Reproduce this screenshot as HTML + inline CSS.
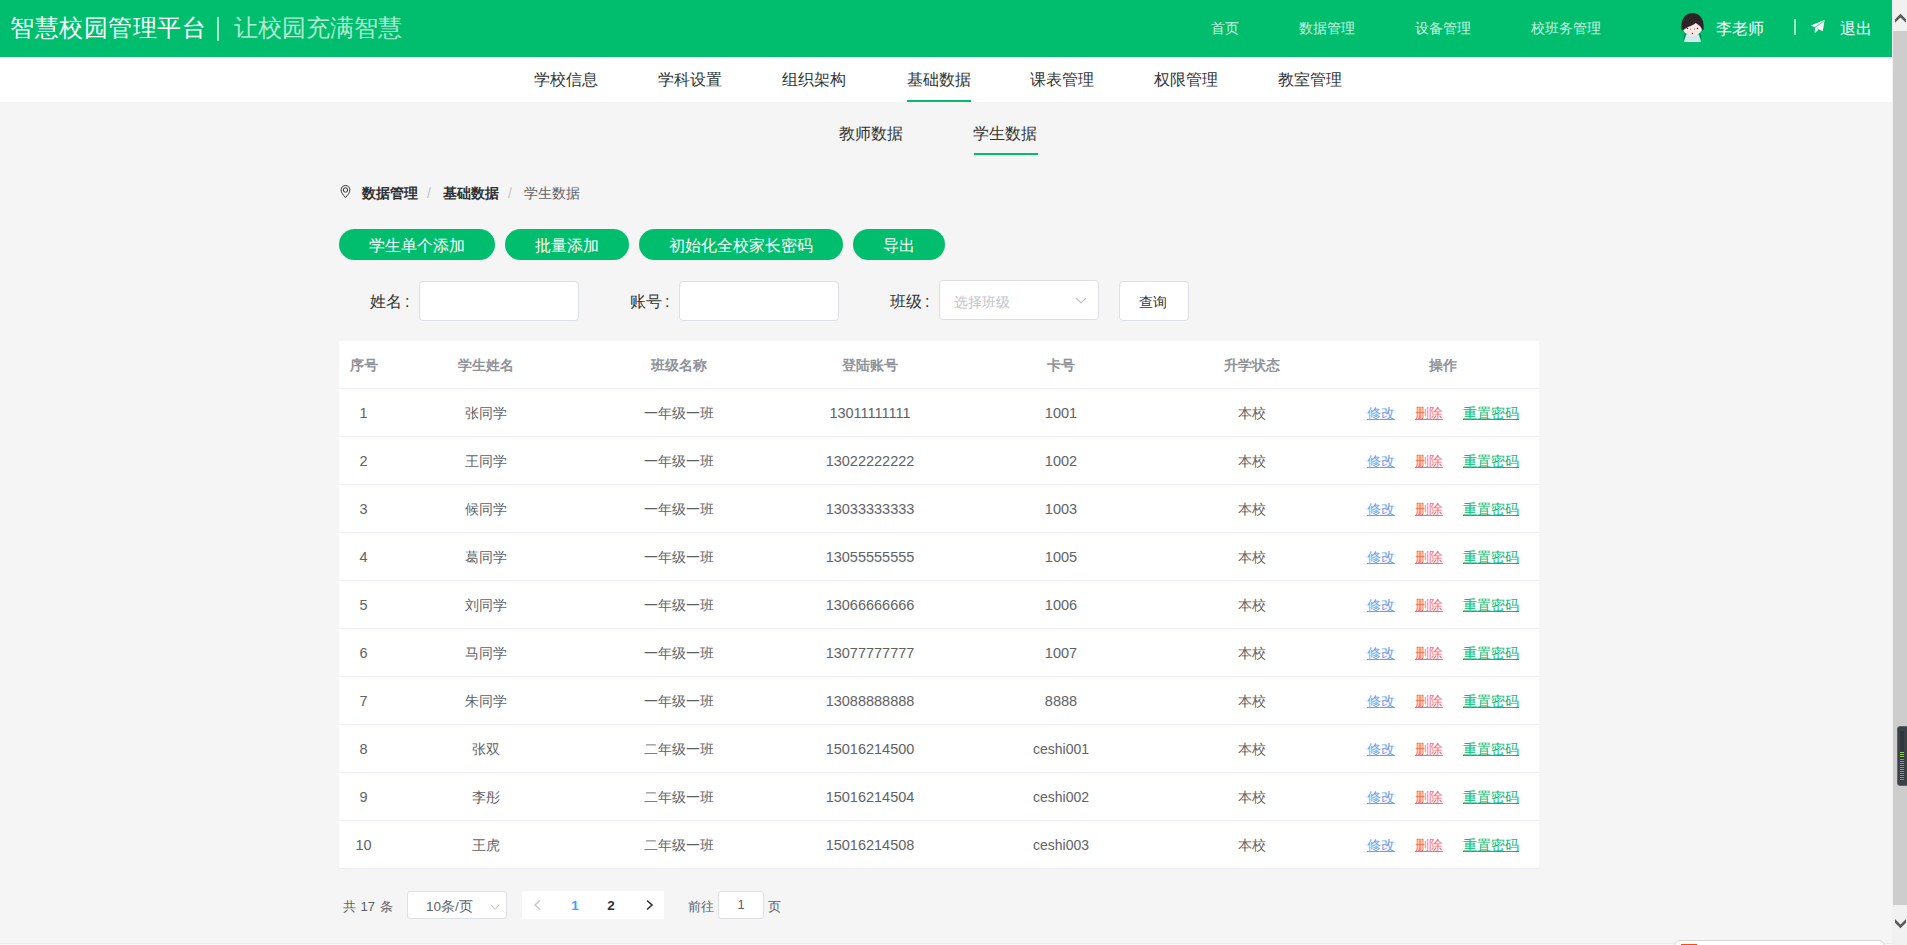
<!DOCTYPE html>
<html><head><meta charset="utf-8">
<style>
*{margin:0;padding:0;box-sizing:border-box}
html,body{width:1907px;height:945px;overflow:hidden;background:#f5f5f5;font-family:"Liberation Sans",sans-serif;color:#333}
.abs{position:absolute}
#hdr{position:absolute;left:0;top:0;width:1892px;height:57px;background:#00be6e}
#title{position:absolute;left:10px;top:12px;font-size:24px;line-height:32px;color:#fff;white-space:nowrap;letter-spacing:0.5px}
#title .sep{color:rgba(255,255,255,.7);margin:0 6px 0 6px}
#title .slo{color:rgba(255,255,255,.7)}
.tnav{position:absolute;top:18px;font-size:14px;line-height:20px;color:rgba(255,255,255,.8);white-space:nowrap}
#subnav{position:absolute;left:0;top:57px;width:1892px;height:45px;background:#fff}
.sn{position:absolute;top:69px;font-size:16px;line-height:22px;color:#333;white-space:nowrap}
.ul{position:absolute;height:2px;background:#00be6e}
.bc{position:absolute;top:183px;font-size:14px;line-height:20px;white-space:nowrap}
.btn{position:absolute;top:229px;height:31px;border-radius:16px;background:#00be6e;color:#fff;font-size:16px;line-height:33px;text-align:center;white-space:nowrap}
.lbl{position:absolute;top:291px;font-size:16px;line-height:22px;color:#333;white-space:nowrap}
.inp{position:absolute;top:281px;width:160px;height:40px;background:#fff;border:1px solid #dcdfe6;border-radius:4px}
#tbl{position:absolute;left:339px;top:341px;width:1200px;height:528px;background:#fff}
.c{position:absolute;width:200px;text-align:center;white-space:nowrap;font-size:14px}
.th{height:48px;line-height:48px;color:#909399;font-weight:bold}
.td{height:48px;line-height:48px;color:#606266}
.hl{position:absolute;left:339px;width:1200px;height:1px;background:#ebeef5}
.ops{position:absolute;left:1367px;height:48px;line-height:48px;font-size:14px;white-space:nowrap}
.ops a{text-decoration:underline;margin-right:20px}
.ops a.b{color:#6d9ef5}
.ops a.r{color:#f56c6c}
.ops a.g{color:#06b96c;margin-right:0}
#sb{position:absolute;left:1892px;top:0;width:15px;height:945px;background:#f1f1f1}
#thumb{position:absolute;left:1893px;top:31px;width:14px;height:874px;background:#cdcdcd}
</style></head><body>
<div id="hdr"></div>
<div id="title">智慧校园管理平台</div>
<div class="abs" style="left:217px;top:17px;width:2px;height:24px;background:rgba(255,255,255,.66)"></div>
<div class="abs" style="left:234px;top:12px;font-size:24px;line-height:32px;color:rgba(255,255,255,.7);white-space:nowrap">让校园充满智慧</div>
<div class="tnav" style="left:1211px">首页</div>
<div class="tnav" style="left:1299px">数据管理</div>
<div class="tnav" style="left:1415px">设备管理</div>
<div class="tnav" style="left:1531px">校班务管理</div>
<div class="abs" style="left:1716px;top:18px;font-size:16px;line-height:22px;color:#fff">李老师</div>
<div class="abs" style="left:1794px;top:19px;width:2px;height:16px;background:rgba(255,255,255,.62)"></div>
<div class="abs" style="left:1840px;top:18px;font-size:16px;line-height:22px;color:#fff">退出</div>


<svg class="abs" style="left:1676px;top:10px" width="32" height="35" viewBox="0 0 32 35">
<path d="M10 24.5 L23 24.5 L25 32 L8 32 Z" fill="#d3eaec"/>
<path d="M9.6 22.5 L8.2 28.5 M23.4 22.5 L24.8 28.5" stroke="#222" stroke-width=".6"/>
<path d="M6.8 12 L6.8 17 C6.8 22 11 25.8 16.5 25.8 C22 25.8 26.2 22 26.2 17 L26.2 12 Z" fill="#fbe5e5"/>
<path d="M5.3 19.5 C4.6 8 10 3 16.5 3 C23 3 28.4 8 27.7 19.5 L26.2 20.3 C25.6 16.5 22 14.5 19.5 13 C18 15.5 12 15.8 6.8 20.5 Z" fill="#2e2428"/>
<circle cx="11.4" cy="18.4" r=".65" fill="#222"/><circle cx="21.5" cy="18.4" r=".65" fill="#222"/>
<circle cx="14.5" cy="19" r=".5" fill="#555"/><circle cx="18.5" cy="19" r=".5" fill="#555"/>
<circle cx="16.5" cy="23.4" r=".7" fill="#222"/>
</svg>
<svg class="abs" style="left:1805px;top:15px" width="22" height="22" viewBox="0 0 22 22">
<path d="M19.6 5 L5.8 10.6 L10.2 12.4 L17.8 16.2 Z" fill="#fff"/>
<path d="M10 12.2 L9.8 18.2 L13.6 14.6 Z" fill="#fff"/>
<path d="M9.6 12.6 L18.6 6.4" stroke="#00be6e" stroke-width=".8"/>
</svg>
<div id="subnav"></div>
<div class="sn" style="left:534px">学校信息</div>
<div class="sn" style="left:658px">学科设置</div>
<div class="sn" style="left:782px">组织架构</div>
<div class="sn" style="left:907px">基础数据</div>
<div class="sn" style="left:1030px">课表管理</div>
<div class="sn" style="left:1154px">权限管理</div>
<div class="sn" style="left:1278px">教室管理</div>
<div class="ul" style="left:907px;top:100px;width:64px"></div>

<div class="sn" style="left:839px;top:123px">教师数据</div>
<div class="sn" style="left:973px;top:123px">学生数据</div>
<div class="ul" style="left:974px;top:153px;width:64px"></div>

<svg class="abs" style="left:339px;top:184px" width="13" height="15" viewBox="0 0 13 15">
<path d="M6.5 13.6 C3.8 10.6 2.1 8.2 2.1 5.9 C2.1 3.4 4.1 1.5 6.5 1.5 C8.9 1.5 10.9 3.4 10.9 5.9 C10.9 8.2 9.2 10.6 6.5 13.6 Z" fill="none" stroke="#303133" stroke-width="1"/>
<circle cx="6.5" cy="6" r="2.2" fill="none" stroke="#303133" stroke-width="1"/>
</svg>
<div class="bc" style="left:362px;font-weight:bold;color:#303133">数据管理</div>
<div class="bc" style="left:427px;color:#c0c4cc">/</div>
<div class="bc" style="left:443px;font-weight:bold;color:#303133">基础数据</div>
<div class="bc" style="left:508px;color:#c0c4cc">/</div>
<div class="bc" style="left:524px;color:#606266">学生数据</div>

<div class="btn" style="left:339px;width:156px">学生单个添加</div>
<div class="btn" style="left:505px;width:124px">批量添加</div>
<div class="btn" style="left:639px;width:204px">初始化全校家长密码</div>
<div class="btn" style="left:853px;width:92px">导出</div>

<div class="lbl" style="left:370px">姓名<span style="margin-left:3px">:</span></div>
<div class="inp" style="left:419px"></div>
<div class="lbl" style="left:630px">账号<span style="margin-left:3px">:</span></div>
<div class="inp" style="left:679px"></div>
<div class="lbl" style="left:890px">班级<span style="margin-left:3px">:</span></div>
<div class="inp" style="left:939px;top:280px"></div>
<div class="abs" style="left:954px;top:292px;font-size:14px;line-height:20px;color:#c0c4cc">选择班级</div>
<svg class="abs" style="left:1074px;top:295px" width="14" height="12" viewBox="0 0 14 12"><path d="M2 3 L7 8 L12 3" fill="none" stroke="#c0c4cc" stroke-width="1.2"/></svg>
<div class="inp" style="left:1119px;width:70px"></div>
<div class="abs" style="left:1139px;top:292px;font-size:14px;line-height:20px;color:#333">查询</div>

<div id="tbl"></div>
<div class="c th" style="left:263.5px;top:341px">序号</div>
<div class="c th" style="left:385.5px;top:341px">学生姓名</div>
<div class="c th" style="left:579px;top:341px">班级名称</div>
<div class="c th" style="left:770px;top:341px">登陆账号</div>
<div class="c th" style="left:961px;top:341px">卡号</div>
<div class="c th" style="left:1152px;top:341px">升学状态</div>
<div class="c th" style="left:1343px;top:341px">操作</div>
<div class="c td" style="left:263.5px;top:389px;font-size:14.5px">1</div>
<div class="c td" style="left:385.5px;top:389px">张同学</div>
<div class="c td" style="left:579px;top:389px">一年级一班</div>
<div class="c td" style="left:770px;top:389px;font-size:14.5px">13011111111</div>
<div class="c td" style="left:961px;top:389px;font-size:14.5px">1001</div>
<div class="c td" style="left:1152px;top:389px">本校</div>
<div class="ops" style="top:389px"><a class="b">修改</a><a class="r">删除</a><a class="g">重置密码</a></div>
<div class="hl" style="top:388px"></div>
<div class="c td" style="left:263.5px;top:437px;font-size:14.5px">2</div>
<div class="c td" style="left:385.5px;top:437px">王同学</div>
<div class="c td" style="left:579px;top:437px">一年级一班</div>
<div class="c td" style="left:770px;top:437px;font-size:14.5px">13022222222</div>
<div class="c td" style="left:961px;top:437px;font-size:14.5px">1002</div>
<div class="c td" style="left:1152px;top:437px">本校</div>
<div class="ops" style="top:437px"><a class="b">修改</a><a class="r">删除</a><a class="g">重置密码</a></div>
<div class="hl" style="top:436px"></div>
<div class="c td" style="left:263.5px;top:485px;font-size:14.5px">3</div>
<div class="c td" style="left:385.5px;top:485px">候同学</div>
<div class="c td" style="left:579px;top:485px">一年级一班</div>
<div class="c td" style="left:770px;top:485px;font-size:14.5px">13033333333</div>
<div class="c td" style="left:961px;top:485px;font-size:14.5px">1003</div>
<div class="c td" style="left:1152px;top:485px">本校</div>
<div class="ops" style="top:485px"><a class="b">修改</a><a class="r">删除</a><a class="g">重置密码</a></div>
<div class="hl" style="top:484px"></div>
<div class="c td" style="left:263.5px;top:533px;font-size:14.5px">4</div>
<div class="c td" style="left:385.5px;top:533px">葛同学</div>
<div class="c td" style="left:579px;top:533px">一年级一班</div>
<div class="c td" style="left:770px;top:533px;font-size:14.5px">13055555555</div>
<div class="c td" style="left:961px;top:533px;font-size:14.5px">1005</div>
<div class="c td" style="left:1152px;top:533px">本校</div>
<div class="ops" style="top:533px"><a class="b">修改</a><a class="r">删除</a><a class="g">重置密码</a></div>
<div class="hl" style="top:532px"></div>
<div class="c td" style="left:263.5px;top:581px;font-size:14.5px">5</div>
<div class="c td" style="left:385.5px;top:581px">刘同学</div>
<div class="c td" style="left:579px;top:581px">一年级一班</div>
<div class="c td" style="left:770px;top:581px;font-size:14.5px">13066666666</div>
<div class="c td" style="left:961px;top:581px;font-size:14.5px">1006</div>
<div class="c td" style="left:1152px;top:581px">本校</div>
<div class="ops" style="top:581px"><a class="b">修改</a><a class="r">删除</a><a class="g">重置密码</a></div>
<div class="hl" style="top:580px"></div>
<div class="c td" style="left:263.5px;top:629px;font-size:14.5px">6</div>
<div class="c td" style="left:385.5px;top:629px">马同学</div>
<div class="c td" style="left:579px;top:629px">一年级一班</div>
<div class="c td" style="left:770px;top:629px;font-size:14.5px">13077777777</div>
<div class="c td" style="left:961px;top:629px;font-size:14.5px">1007</div>
<div class="c td" style="left:1152px;top:629px">本校</div>
<div class="ops" style="top:629px"><a class="b">修改</a><a class="r">删除</a><a class="g">重置密码</a></div>
<div class="hl" style="top:628px"></div>
<div class="c td" style="left:263.5px;top:677px;font-size:14.5px">7</div>
<div class="c td" style="left:385.5px;top:677px">朱同学</div>
<div class="c td" style="left:579px;top:677px">一年级一班</div>
<div class="c td" style="left:770px;top:677px;font-size:14.5px">13088888888</div>
<div class="c td" style="left:961px;top:677px;font-size:14.5px">8888</div>
<div class="c td" style="left:1152px;top:677px">本校</div>
<div class="ops" style="top:677px"><a class="b">修改</a><a class="r">删除</a><a class="g">重置密码</a></div>
<div class="hl" style="top:676px"></div>
<div class="c td" style="left:263.5px;top:725px;font-size:14.5px">8</div>
<div class="c td" style="left:385.5px;top:725px">张双</div>
<div class="c td" style="left:579px;top:725px">二年级一班</div>
<div class="c td" style="left:770px;top:725px;font-size:14.5px">15016214500</div>
<div class="c td" style="left:961px;top:725px">ceshi001</div>
<div class="c td" style="left:1152px;top:725px">本校</div>
<div class="ops" style="top:725px"><a class="b">修改</a><a class="r">删除</a><a class="g">重置密码</a></div>
<div class="hl" style="top:724px"></div>
<div class="c td" style="left:263.5px;top:773px;font-size:14.5px">9</div>
<div class="c td" style="left:385.5px;top:773px">李彤</div>
<div class="c td" style="left:579px;top:773px">二年级一班</div>
<div class="c td" style="left:770px;top:773px;font-size:14.5px">15016214504</div>
<div class="c td" style="left:961px;top:773px">ceshi002</div>
<div class="c td" style="left:1152px;top:773px">本校</div>
<div class="ops" style="top:773px"><a class="b">修改</a><a class="r">删除</a><a class="g">重置密码</a></div>
<div class="hl" style="top:772px"></div>
<div class="c td" style="left:263.5px;top:821px;font-size:14.5px">10</div>
<div class="c td" style="left:385.5px;top:821px">王虎</div>
<div class="c td" style="left:579px;top:821px">二年级一班</div>
<div class="c td" style="left:770px;top:821px;font-size:14.5px">15016214508</div>
<div class="c td" style="left:961px;top:821px">ceshi003</div>
<div class="c td" style="left:1152px;top:821px">本校</div>
<div class="ops" style="top:821px"><a class="b">修改</a><a class="r">删除</a><a class="g">重置密码</a></div>
<div class="hl" style="top:820px"></div>
<div class="hl" style="top:868px"></div>

<div class="abs" style="left:343px;top:897px;word-spacing:1px;font-size:13px;line-height:20px;color:#606266">共 17 条</div>


<div class="abs" style="left:407px;top:891px;width:100px;height:28px;background:#fff;border:1px solid #dcdfe6;border-radius:3px"></div>
<div class="abs" style="left:426px;top:897px;font-size:13.5px;line-height:20px;color:#606266">10条/页</div>
<svg class="abs" style="left:489px;top:901px" width="12" height="12" viewBox="0 0 12 12"><path d="M2 4 L6 8.5 L10 4" fill="none" stroke="#c0c4cc" stroke-width="1"/></svg>
<div class="abs" style="left:522px;top:891px;width:142px;height:28px;background:#fff"></div>
<svg class="abs" style="left:530px;top:898px" width="14" height="14" viewBox="0 0 14 14"><path d="M10 2.5 L5 7 L10 11.5" fill="none" stroke="#c0c4cc" stroke-width="1.4"/></svg>
<div class="abs" style="left:560px;top:896px;width:30px;text-align:center;font-size:13.5px;line-height:20px;color:#409eff;font-weight:bold">1</div>
<div class="abs" style="left:596px;top:896px;width:30px;text-align:center;font-size:13.5px;line-height:20px;color:#303133;font-weight:bold">2</div>
<svg class="abs" style="left:643px;top:898px" width="14" height="14" viewBox="0 0 14 14"><path d="M4 2.5 L9 7 L4 11.5" fill="none" stroke="#303133" stroke-width="1.6"/></svg>
<div class="abs" style="left:688px;top:897px;font-size:13px;line-height:20px;color:#606266">前往</div>
<div class="abs" style="left:718px;top:891px;width:46px;height:28px;background:#fff;border:1px solid #dcdfe6;border-radius:3px;text-align:center;font-size:13px;line-height:26px;color:#606266">1</div>
<div class="abs" style="left:768px;top:897px;font-size:13px;line-height:20px;color:#606266">页</div>
<div id="sb"></div>
<div id="thumb"></div>

<svg class="abs" style="left:1892px;top:9px" width="15" height="16" viewBox="0 0 15 16"><path d="M8.5 4.8 L14 10.3 L14 13.8 L8.5 8.6 L3 13.8 L3 10.3 Z" fill="#5a5a5a"/></svg>
<svg class="abs" style="left:1892px;top:913px" width="15" height="16" viewBox="0 0 15 16"><path d="M8.5 15.2 L14 9.7 L14 6 L8.5 11.4 L3 6 L3 9.7 Z" fill="#5a5a5a"/></svg>
<div class="abs" style="left:1897px;top:726px;width:12px;height:60px;background:#3b4147;border:1px solid #5c636a;border-radius:3px"></div>
<div class="abs" style="left:1900px;top:731px;width:4px;height:22px;background:#30363b"></div>
<div class="abs" style="left:1900px;top:753px;width:4px;height:28px;background:repeating-linear-gradient(#26b5ef 0 1.2px,#30363b 1.2px 2px)"></div>
<div class="abs" style="left:1900px;top:752px;width:4px;height:6px;background:repeating-linear-gradient(#8ed058 0 1.2px,#30363b 1.2px 2px)"></div>
<div class="abs" style="left:0;top:943px;width:1892px;height:1px;background:#ececec"></div>
<div class="abs" style="left:0;top:944px;width:1892px;height:1px;background:#f9f9f9"></div>
<div class="abs" style="left:1674px;top:940px;width:211px;height:12px;background:#fff;border:1px solid #d6d6d6;border-radius:6px"></div>
<div class="abs" style="left:1681px;top:944px;width:16px;height:2px;background:#ff4a0a"></div>
</body></html>
